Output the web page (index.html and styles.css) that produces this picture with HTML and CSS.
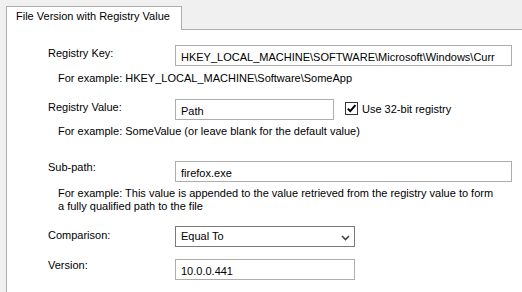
FILE: index.html
```html
<!DOCTYPE html>
<html lang="en">

<head>
    <meta charset="UTF-8">
    <meta name="viewport" content="width=device-width, initial-scale=1.0">
    <title>File Version with Registry Value</title>
    <link rel="stylesheet" href="styles.css">
</head>

<body>

    <div class="tabs">
        <div class="tab">File Version with Registry Value</div>
    </div>

    <div class="panel">
        <div class="row">
            <label class="field-label">Registry Key:</label>
            <input class="text-box wide" value="HKEY_LOCAL_MACHINE\SOFTWARE\Microsoft\Windows\Curr">
        </div>
        <p class="hint hint-first">For example: HKEY_LOCAL_MACHINE\Software\SomeApp</p>

        <div class="row row-second">
            <label class="field-label">Registry Value:</label>
            <input class="text-box medium" value="Path">
            <label class="check">
                <span class="check-box">
                    <svg width="11" height="11" viewBox="0 0 11 11">
                        <path d="M1.8 5.6 L4.3 8.1 L9.4 2.2" fill="none" stroke="#000" stroke-width="2" />
                    </svg>
                </span>
                <span class="check-text">Use 32-bit registry</span>
            </label>
        </div>
        <p class="hint">For example: SomeValue (or leave blank for the default value)</p>

        <div class="row row-third">
            <label class="field-label flush">Sub-path:</label>
            <input class="text-box wide" value="firefox.exe">
        </div>
        <p class="hint">For example: This value is appended to the value retrieved from the registry value to form<br>a fully qualified path to the file</p>

        <div class="row row-fourth">
            <label class="field-label low">Comparison:</label>
            <div class="select-box">
                <span>Equal To</span>
                <svg width="9" height="6" viewBox="0 0 9 6">
                    <path d="M1 1 L4.5 4.5 L8 1" fill="none" stroke="#444" stroke-width="1.6" />
                </svg>
            </div>
        </div>

        <div class="row row-fifth">
            <label class="field-label flush">Version:</label>
            <input class="text-box short" value="10.0.0.441">
        </div>
    </div>

</body>

</html>
```

FILE: styles.css
```css
* {
    margin: 0;
    padding: 0;
    box-sizing: border-box;
}

body {
    background-color: #f0f0f0;
    font-family: "Liberation Sans", Arial, sans-serif;
    font-size: 11px;
    line-height: 13px;
    color: #000;
    padding: 6px 0 0 6px;
    height: 292px;
    overflow: hidden;
    display: flex;
    flex-direction: column;
}

.tabs {
    display: flex;
}

.tab {
    position: relative;
    z-index: 1;
    width: 176px;
    height: 24px;
    margin-bottom: -1px;
    padding: 3px 0 0 9px;
    background-color: #fff;
    border: 1px solid #adadad;
    border-bottom: none;
}

.panel {
    flex: 1;
    background-color: #fff;
    border-left: 1px solid #adadad;
    border-top: 1px solid #adadad;
    padding: 15px 0 0 41px;
}

.row {
    display: flex;
    align-items: flex-start;
}

.row-second {
    margin-top: 14px;
}

.row-third {
    margin-top: 23px;
}

.row-fourth {
    margin-top: 13px;
}

.row-fifth {
    margin-top: 12px;
}

.field-label {
    width: 127px;
    padding-top: 2px;
}

.field-label.flush {
    padding-top: 0;
}

.field-label.low {
    padding-top: 3px;
}

.text-box {
    height: 21px;
    border: 1px solid #adadad;
    padding: 2px 5px 0;
    font: inherit;
    color: #000;
    background-color: #fff;
    outline: none;
}

.wide {
    width: 337px;
}

.medium {
    width: 159px;
}

.short {
    width: 180px;
}

.hint {
    margin: 5px 0 0 10px;
}

.hint-first {
    margin-top: 6px;
}

.check {
    display: flex;
    align-items: flex-start;
    margin-left: 11px;
}

.check-box {
    width: 13px;
    height: 13px;
    margin-top: 3px;
    border: 1px solid #333;
    display: flex;
    align-items: center;
    justify-content: center;
}

.check-text {
    margin-left: 4px;
    padding-top: 4px;
}

.select-box {
    width: 180px;
    height: 21px;
    border: 1px solid #7a7a7a;
    padding: 3px 4px 0 5px;
    display: flex;
    justify-content: space-between;
    align-items: flex-start;
}

.select-box svg {
    margin-top: 5px;
}
```
